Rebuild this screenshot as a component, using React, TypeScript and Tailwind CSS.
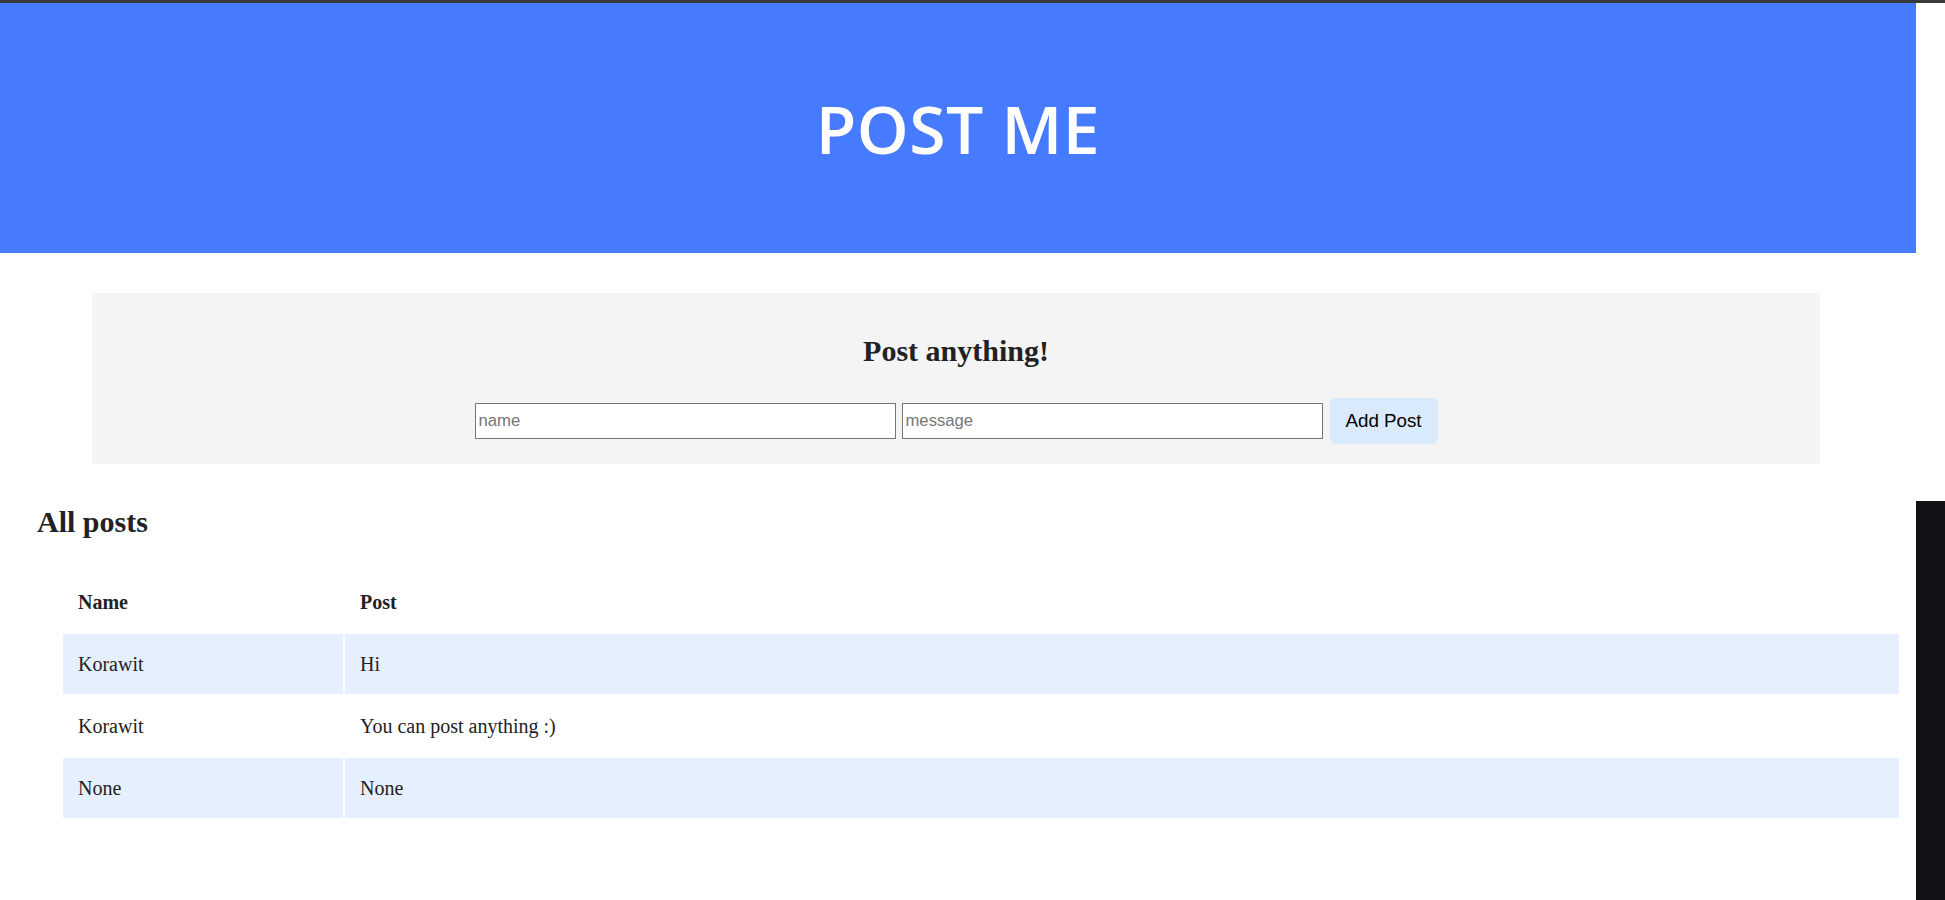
import React from "react";

const rows = [
  { name: "Korawit", post: "Hi", shaded: true },
  { name: "Korawit", post: "You can post anything :)", shaded: false },
  { name: "None", post: "None", shaded: true },
];

export default function App() {
  const serif = { fontFamily: '"Liberation Serif", "Times New Roman", serif' };
  return (
    <div className="w-[1945px] h-[900px] overflow-hidden bg-white flex flex-col">
      <div className="h-[3px] w-full bg-[#3b3b3d]" />
      <div className="flex flex-1">
        <div className="w-[1916px] flex flex-col text-[#222222]" style={serif}>
          <header className="h-[250px] bg-[#477bff] flex items-center justify-center">
            <h1
              className="text-white text-[66px] font-semibold leading-none tracking-[0.5px]"
              style={{ fontFamily: '"Open Sans", "Noto Sans", sans-serif' }}
            >
              POST ME
            </h1>
          </header>

          <section className="mt-[40px] ml-[92px] w-[1728px] bg-[#f4f4f4] pt-[41px] pb-[20px] flex flex-col items-center">
            <h2 className="text-[30px] font-bold leading-[34.5px]">Post anything!</h2>
            <form
              className="mt-[29.5px] flex items-center gap-[6px]"
              onSubmit={(e) => e.preventDefault()}
              style={{ fontFamily: '"Liberation Sans", Arial, sans-serif' }}
            >
              <input
                placeholder="name"
                className="w-[421px] h-[36px] bg-white border border-[#767676] px-[3px] text-[16.67px] placeholder:text-[#757575] outline-none"
              />
              <input
                placeholder="message"
                className="w-[421px] h-[36px] bg-white border border-[#767676] px-[3px] text-[16.67px] placeholder:text-[#757575] outline-none"
              />
              <button
                type="submit"
                className="ml-[1px] w-[108px] h-[46px] rounded-[5px] bg-[#d9eafd] text-black text-[18.75px]"
              >
                Add Post
              </button>
            </form>
          </section>

          <section className="px-[37px]">
            <h2 className="mt-[41px] text-[30px] font-bold leading-[34.5px]">All posts</h2>
            <table className="mt-[30px] ml-[24px] w-[1840px] border-separate border-spacing-[2px] text-[20px]">
              <thead>
                <tr>
                  <th className="w-[280px] h-[60px] px-[15px] text-left font-bold">Name</th>
                  <th className="h-[60px] px-[15px] text-left font-bold">Post</th>
                </tr>
              </thead>
              <tbody>
                {rows.map((r, i) => (
                  <tr key={i} className={r.shaded ? "bg-[#e6effe]" : "bg-white"}>
                    <td className="w-[280px] h-[60px] px-[15px]">{r.name}</td>
                    <td className="h-[60px] px-[15px]">{r.post}</td>
                  </tr>
                ))}
              </tbody>
            </table>
          </section>
        </div>
        <div className="w-[29px] flex flex-col">
          <div className="h-[498px] bg-white" />
          <div className="flex-1 bg-[#131217]" />
        </div>
      </div>
    </div>
  );
}
